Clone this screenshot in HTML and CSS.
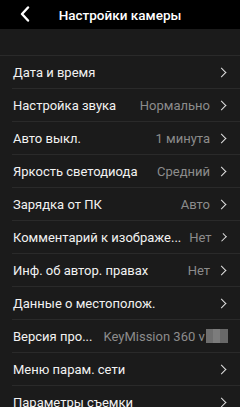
FILE: index.html
```html
<!DOCTYPE html>
<html lang="ru">
  <head>
    <meta charset="UTF-8" />
    <meta name="viewport" content="width=device-width, initial-scale=1.0" />
    <title>Настройки камеры</title>
    <link rel="stylesheet" href="styles.css">
  </head>
  <body>
    <div class="header">
      <svg class="back" width="10" height="16" viewBox="0 0 10 16">
        <path d="M8 1.5 L2 8 L8 14.5" fill="none" stroke="#fff" stroke-width="2.4" stroke-linecap="round" stroke-linejoin="round" />
      </svg>
      <h1>Настройки камеры</h1>
    </div>

    <div class="list">
      <div class="row"><span class="label">Дата и время</span><span class="chev"></span></div>
      <div class="row"><span class="label">Настройка звука</span><span class="value">Нормально</span><span class="chev"></span></div>
      <div class="row"><span class="label">Авто выкл.</span><span class="value">1 минута</span><span class="chev"></span></div>
      <div class="row"><span class="label">Яркость светодиода</span><span class="value">Средний</span><span class="chev"></span></div>
      <div class="row"><span class="label">Зарядка от ПК</span><span class="value">Авто</span><span class="chev"></span></div>
      <div class="row"><span class="label">Комментарий к изображе...</span><span class="value">Нет</span><span class="chev"></span></div>
      <div class="row"><span class="label">Инф. об автор. правах</span><span class="value">Нет</span><span class="chev"></span></div>
      <div class="row"><span class="label">Данные о местополож.</span><span class="chev"></span></div>
      <div class="row version">
        <span class="label">Версия про...</span>
        <span class="value">KeyMission 360 v</span>
        <span class="blur"><i></i><i></i><i></i></span>
      </div>
      <div class="row"><span class="label">Меню парам. сети</span><span class="chev"></span></div>
      <div class="row"><span class="label">Параметры съемки</span><span class="chev"></span></div>
    </div>
  </body>
</html>
```

FILE: styles.css
```css
*,
*::before,
*::after {
  margin: 0;
  padding: 0;
  box-sizing: border-box;
}

body {
  font-family: Roboto, "Liberation Sans", sans-serif;
  background-color: #1b1b1b;
  color: #fff;
  width: 240px;
  height: 407px;
  overflow: hidden;
}

.header {
  height: 29px;
  background-color: #000;
  display: flex;
  align-items: center;
  justify-content: center;
  position: relative;
}

.header h1 {
  font-size: 13.5px;
  font-weight: 500;
}

.back {
  position: absolute;
  left: 20px;
  top: 6px;
}

.list {
  margin-top: 26px;
  border-top: 1px solid #2a2a2a;
}

.row {
  height: 33px;
  margin-left: 12px;
  padding-right: 13px;
  display: flex;
  align-items: center;
  gap: 8px;
  border-bottom: 1px solid #2a2a2a;
  font-size: 13px;
  color: #f2f2f2;
}

.label {
  flex: 1;
  white-space: nowrap;
  padding-left: 1px;
}

.value {
  color: #8c8c8c;
  white-space: nowrap;
}

.chev {
  width: 7px;
  height: 7px;
  border-top: 1.8px solid #e0e0e0;
  border-right: 1.8px solid #e0e0e0;
  transform: rotate(45deg);
  margin-right: 2px;
}

.version .label {
  flex: none;
  margin-right: 3px;
}

.blur {
  display: flex;
  margin-left: -7px;
}

.blur i {
  display: block;
  width: 7px;
  height: 14px;
  background-color: #6e6e6e;
}

.blur i:nth-child(2) {
  background-color: #7c7c7c;
}

.blur i:nth-child(3) {
  background-color: #686868;
  width: 8px;
}
```
